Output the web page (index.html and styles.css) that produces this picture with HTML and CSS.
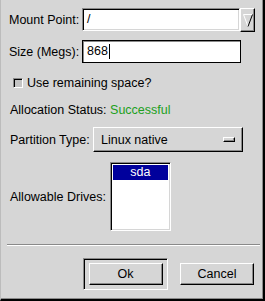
FILE: index.html
```html
<!DOCTYPE html>
<html lang="en">

<head>
    <meta charset="UTF-8">
    <meta name="viewport" content="width=device-width, initial-scale=1.0">
    <title>Edit Partition</title>
    <link rel="stylesheet" href="styles.css">
</head>

<body>
    <div class="dialog">
        <div class="form-grid">
            <span class="label">Mount Point:</span>
            <div class="combo">
                <div class="entry combo-entry">/</div>
                <div class="combo-button">
                    <svg width="10" height="13" viewBox="0 0 10 13">
                        <path d="M0.5 0.5 H9.5" stroke="#ffffff" fill="none" />
                        <path d="M0.5 0.5 L5 12.5" stroke="#ffffff" fill="none" />
                        <path d="M9.5 0.5 L5 12.5" stroke="#000000" fill="none" />
                    </svg>
                </div>
            </div>
            <span class="label">Size (Megs):</span>
            <div class="entry focused">868<span class="cursor"></span></div>
        </div>

        <div class="check-row">
            <span class="check"></span>
            <span>Use remaining space?</span>
        </div>

        <div class="status-row">
            Allocation Status: <span class="status-ok">Successful</span>
        </div>

        <div class="type-row">
            <span class="label">Partition Type:</span>
            <div class="option-menu">
                <span>Linux native</span>
                <span class="indicator"></span>
            </div>
        </div>

        <div class="drives-row">
            <span class="label">Allowable Drives:</span>
            <div class="listbox">
                <div class="list-item selected">sda</div>
            </div>
        </div>

        <div class="separator"></div>

        <div class="button-row">
            <div class="default-frame">
                <div class="button ok-button">Ok</div>
            </div>
            <div class="button">Cancel</div>
        </div>
    </div>
</body>

</html>
```

FILE: styles.css
```css
body {
    font-family: 'Liberation Sans', Arial, sans-serif;
    font-size: 12.5px;
    margin: 0;
    padding: 0;
}

.dialog {
    width: 265px;
    height: 301px;
    box-sizing: border-box;
    background-color: #d6d6d6;
    color: #000;
    padding: 8px 0 0 8px;
    border-left: 1px solid #bcbcbc;
    border-right: 2px solid #000;
    border-bottom: 2px solid #000;
    box-shadow: inset -1px -1px 0 #8a8a8a;
}

.form-grid {
    display: grid;
    grid-template-columns: 73px auto;
    grid-template-rows: 24px 23px;
    row-gap: 8px;
    align-items: center;
}

.label {
    white-space: nowrap;
}

.combo {
    display: flex;
    height: 24px;
}

/* sunken text entry */
.entry {
    box-sizing: border-box;
    width: 159px;
    height: 23px;
    background-color: #fff;
    border: 1px solid;
    border-color: #8a8a8a #fff #fff #8a8a8a;
    box-shadow: inset 1px 1px 0 #000, inset -1px -1px 0 #d6d6d6;
    padding: 0 0 0 4px;
    line-height: 21px;
    display: flex;
    align-items: center;
}

.combo-entry {
    height: 23px;
    width: 158px;
}

.entry.focused {
    border-color: #000;
    box-shadow: inset 1px 1px 0 #8a8a8a, inset -1px -1px 0 #fff;
}

.cursor {
    display: inline-block;
    width: 1px;
    height: 15px;
    background-color: #000;
    margin-left: 1px;
}

.combo-button {
    box-sizing: border-box;
    width: 15px;
    height: 24px;
    border: 1px solid;
    border-color: #fff #000 #000 #fff;
    box-shadow: inset -1px -1px 0 #8a8a8a;
    display: flex;
    align-items: center;
    justify-content: center;
}

.check-row {
    display: flex;
    align-items: center;
    height: 14px;
    margin-top: 13px;
    padding-left: 4px;
}

.check {
    box-sizing: border-box;
    width: 10px;
    height: 10px;
    border: 1px solid;
    border-color: #8a8a8a #fff #fff #8a8a8a;
    box-shadow: inset 1px 1px 0 #000;
    background-color: #c4c4c4;
    margin-right: 4px;
}

.status-row {
    height: 14px;
    line-height: 14px;
    margin-top: 13px;
    padding-left: 1px;
}

.status-ok {
    color: #20a020;
}

.type-row {
    display: flex;
    align-items: center;
    margin-top: 10px;
    padding-left: 1px;
}

/* raised option menu */
.option-menu {
    box-sizing: border-box;
    width: 150px;
    height: 25px;
    margin-left: auto;
    margin-right: 20px;
    border: 1px solid;
    border-color: #fff #000 #000 #fff;
    box-shadow: inset -1px -1px 0 #8a8a8a;
    display: flex;
    align-items: center;
    justify-content: space-between;
    padding: 0 7px 0 7px;
}

.indicator {
    box-sizing: border-box;
    width: 12px;
    height: 5px;
    border: 1px solid;
    border-color: #fff #000 #000 #fff;
    box-shadow: inset -1px -1px 0 #8a8a8a;
}

.drives-row {
    display: flex;
    align-items: center;
    margin-top: 10px;
    padding-left: 1px;
}

.listbox {
    box-sizing: border-box;
    width: 61px;
    height: 69px;
    margin-left: 4px;
    background-color: #fff;
    border: 1px solid;
    border-color: #8a8a8a #fff #fff #8a8a8a;
    box-shadow: inset 1px 1px 0 #000, inset -1px -1px 0 #d6d6d6;
    padding: 2px;
}

.list-item {
    height: 15px;
    line-height: 15px;
    text-align: center;
}

.list-item.selected {
    background-color: #00009c;
    color: #fff;
}

.separator {
    margin: 13px 3px 0 -2px;
    height: 0;
    border-top: 1px solid #8a8a8a;
    border-bottom: 1px solid #fff;
}

.button-row {
    display: flex;
    align-items: center;
    margin-top: 12px;
    padding-left: 74px;
    gap: 12px;
}

.default-frame {
    box-sizing: border-box;
    width: 85px;
    height: 32px;
    border: 1px solid;
    border-color: #8a8a8a #fff #fff #8a8a8a;
    box-shadow: inset 1px 1px 0 #000;
    display: flex;
    align-items: center;
    justify-content: center;
}

.button {
    box-sizing: border-box;
    width: 74px;
    height: 22px;
    border: 1px solid;
    border-color: #fff #000 #000 #fff;
    box-shadow: inset -1px -1px 0 #8a8a8a;
    display: flex;
    align-items: center;
    justify-content: center;
}
```
